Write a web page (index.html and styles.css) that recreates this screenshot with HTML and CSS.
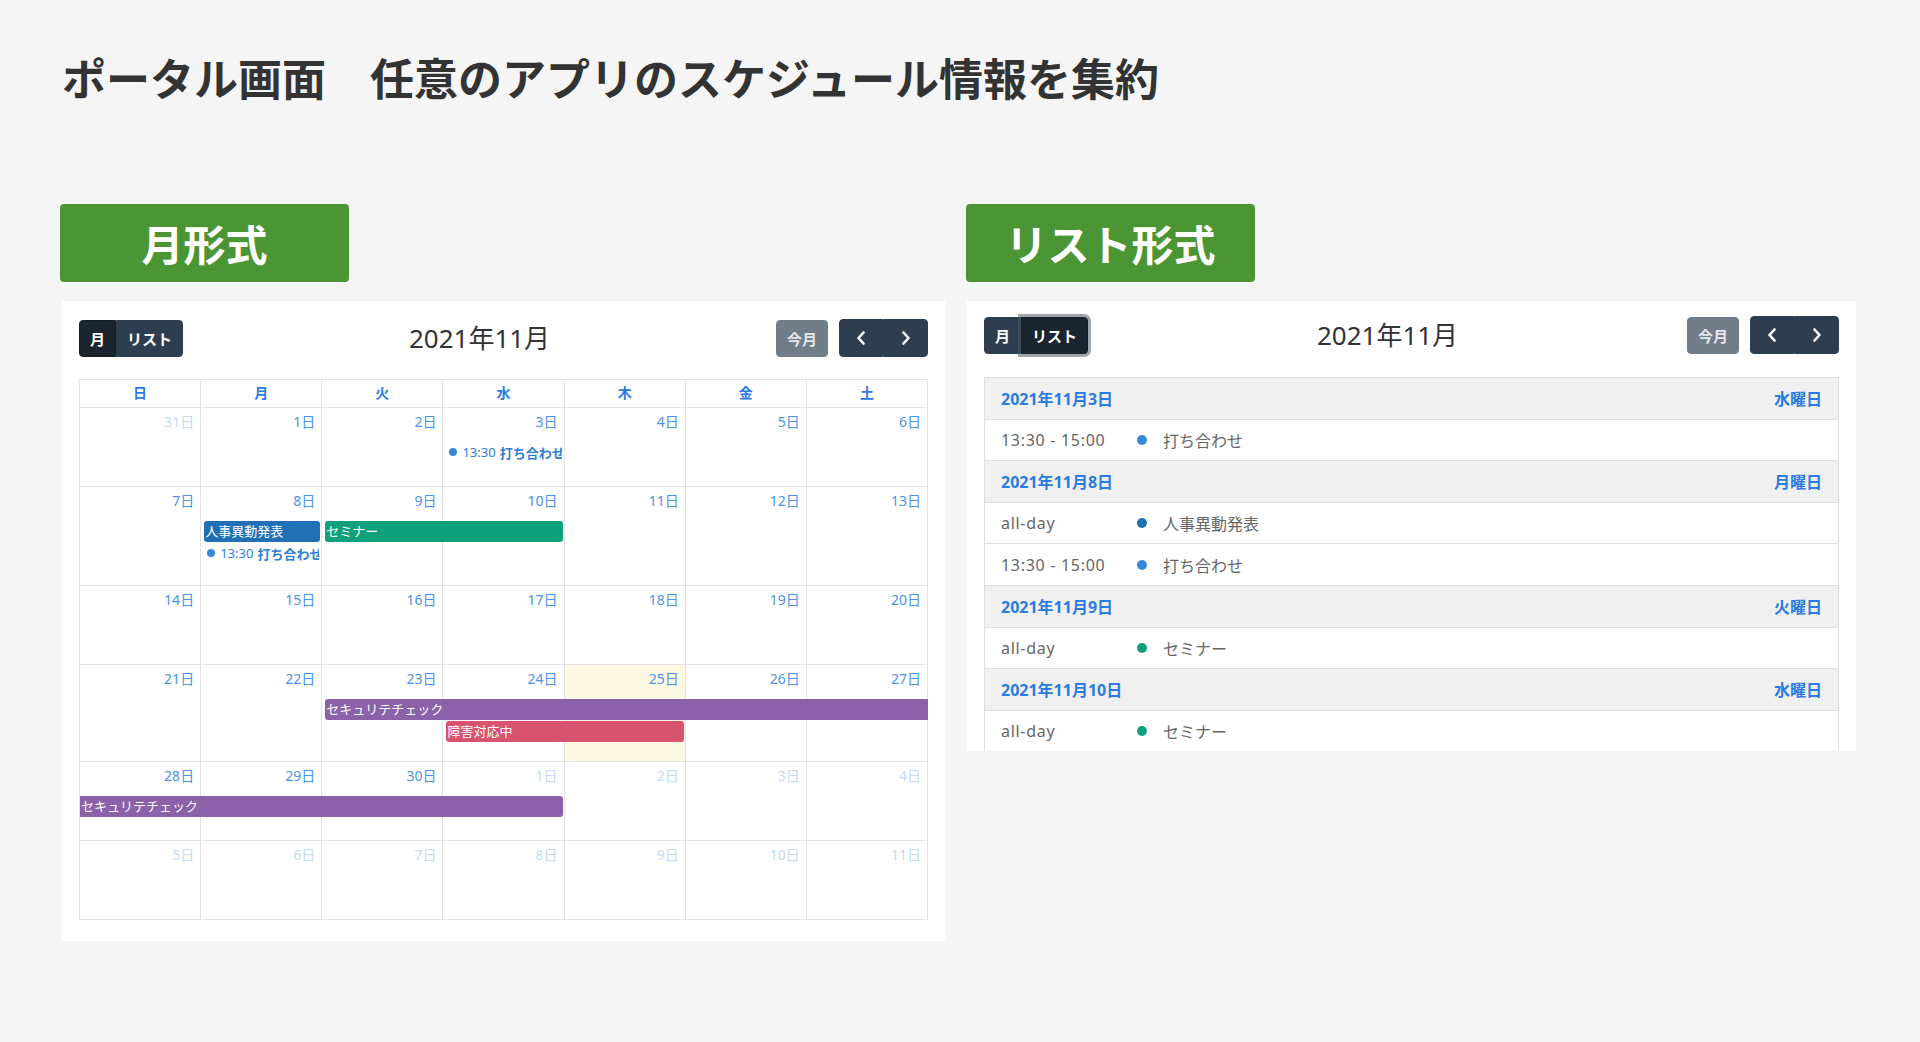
FILE: index.html
```html
<!DOCTYPE html>
<html lang="ja">
<head>
<meta charset="utf-8">
<title>ポータル画面</title>
<link rel="stylesheet" href="styles.css">
</head>
<body>
<div class="page">
  <h1 class="title">ポータル画面　任意のアプリのスケジュール情報を集約</h1>
  <div class="columns">
    <section class="col col-month">
      <div class="label">月形式</div>
      <div class="panel panel-month">
        <div class="toolbar">
          <div class="btn-group">
            <button class="btn active">月</button><button class="btn">リスト</button>
          </div>
          <h2 class="cal-title">2021年11月</h2>
          <div class="toolbar-right">
            <button class="btn btn-today">今月</button>
            <div class="btn-group">
              <button class="btn btn-nav"><svg width="10" height="14" viewBox="0 0 10 14"><path d="M7.5 1.5 L2.5 7 L7.5 12.5" fill="none" stroke="#fff" stroke-width="2.6" stroke-linecap="round" stroke-linejoin="round"/></svg></button><button class="btn btn-nav"><svg width="10" height="14" viewBox="0 0 10 14"><path d="M2.5 1.5 L7.5 7 L2.5 12.5" fill="none" stroke="#fff" stroke-width="2.6" stroke-linecap="round" stroke-linejoin="round"/></svg></button>
            </div>
          </div>
        </div>
        <div class="month">
          <div class="dow">
            <div>日</div><div>月</div><div>火</div><div>水</div><div>木</div><div>金</div><div>土</div>
          </div>
          <div class="week">
            <div class="day c1 other">31日</div><div class="day c2">1日</div><div class="day c3">2日</div><div class="day c4">3日</div><div class="day c5">4日</div><div class="day c6">5日</div><div class="day c7">6日</div>
            <div class="dot-ev r2 s4"><span class="dot"></span><span class="ev-time">13:30</span> <b>打ち合わせ</b></div>
          </div>
          <div class="week">
            <div class="day c1">7日</div><div class="day c2">8日</div><div class="day c3">9日</div><div class="day c4">10日</div><div class="day c5">11日</div><div class="day c6">12日</div><div class="day c7">13日</div>
            <div class="bar bar-blue r2 s2 e3">人事異動発表</div>
            <div class="bar bar-green r2 s3 e5">セミナー</div>
            <div class="dot-ev r3 s2"><span class="dot"></span><span class="ev-time">13:30</span> <b>打ち合わせ</b></div>
          </div>
          <div class="week">
            <div class="day c1">14日</div><div class="day c2">15日</div><div class="day c3">16日</div><div class="day c4">17日</div><div class="day c5">18日</div><div class="day c6">19日</div><div class="day c7">20日</div>
          </div>
          <div class="week">
            <div class="day c1">21日</div><div class="day c2">22日</div><div class="day c3">23日</div><div class="day c4">24日</div><div class="day c5 today">25日</div><div class="day c6">26日</div><div class="day c7">27日</div>
            <div class="bar bar-purple r2 s3 e8 cont-right">セキュリテチェック</div>
            <div class="bar bar-red r3 s4 e6">障害対応中</div>
          </div>
          <div class="week">
            <div class="day c1">28日</div><div class="day c2">29日</div><div class="day c3">30日</div><div class="day c4 other">1日</div><div class="day c5 other">2日</div><div class="day c6 other">3日</div><div class="day c7 other">4日</div>
            <div class="bar bar-purple r2 s1 e5 cont-left">セキュリテチェック</div>
          </div>
          <div class="week">
            <div class="day c1 other">5日</div><div class="day c2 other">6日</div><div class="day c3 other">7日</div><div class="day c4 other">8日</div><div class="day c5 other">9日</div><div class="day c6 other">10日</div><div class="day c7 other">11日</div>
          </div>
        </div>
      </div>
    </section>

    <section class="col col-list">
      <div class="label">リスト形式</div>
      <div class="panel panel-list">
        <div class="toolbar">
          <div class="btn-group">
            <button class="btn">月</button><button class="btn active focus">リスト</button>
          </div>
          <h2 class="cal-title">2021年11月</h2>
          <div class="toolbar-right">
            <button class="btn btn-today">今月</button>
            <div class="btn-group">
              <button class="btn btn-nav"><svg width="10" height="14" viewBox="0 0 10 14"><path d="M7.5 1.5 L2.5 7 L7.5 12.5" fill="none" stroke="#fff" stroke-width="2.6" stroke-linecap="round" stroke-linejoin="round"/></svg></button><button class="btn btn-nav"><svg width="10" height="14" viewBox="0 0 10 14"><path d="M2.5 1.5 L7.5 7 L2.5 12.5" fill="none" stroke="#fff" stroke-width="2.6" stroke-linecap="round" stroke-linejoin="round"/></svg></button>
            </div>
          </div>
        </div>
        <div class="list">
          <div class="list-day"><span>2021年11月3日</span><span>水曜日</span></div>
          <div class="list-event"><span class="l-time">13:30 - 15:00</span><span class="l-dot dot-meet"></span><span class="l-title">打ち合わせ</span></div>
          <div class="list-day"><span>2021年11月8日</span><span>月曜日</span></div>
          <div class="list-event"><span class="l-time">all-day</span><span class="l-dot dot-hr"></span><span class="l-title">人事異動発表</span></div>
          <div class="list-event"><span class="l-time">13:30 - 15:00</span><span class="l-dot dot-meet"></span><span class="l-title">打ち合わせ</span></div>
          <div class="list-day"><span>2021年11月9日</span><span>火曜日</span></div>
          <div class="list-event"><span class="l-time">all-day</span><span class="l-dot dot-sem"></span><span class="l-title">セミナー</span></div>
          <div class="list-day"><span>2021年11月10日</span><span>水曜日</span></div>
          <div class="list-event"><span class="l-time">all-day</span><span class="l-dot dot-sem"></span><span class="l-title">セミナー</span></div>
        </div>
      </div>
    </section>
  </div>
</div>
</body>
</html>
```

FILE: styles.css
```css
* { box-sizing: border-box; }

html, body {
  margin: 0;
  padding: 0;
  background: #f5f5f5;
}

body {
  font-family: "Noto Sans", "Noto Sans CJK JP", sans-serif;
  color: #333;
}

.page {
  padding: 0 0 0 60px;
}

.title {
  margin: 55px 0 0 2px;
  font-family: "Noto Sans CJK JP", sans-serif;
  font-size: 44px;
  line-height: 44px;
  font-weight: 700;
  color: #333;
  white-space: nowrap;
}

.columns {
  display: flex;
  align-items: flex-start;
  gap: 21px;
  margin-top: 105px;
}

.col-month { width: 885px; }
.col-list { width: 890px; }

.label {
  width: 289px;
  height: 78px;
  display: flex;
  align-items: center;
  justify-content: center;
  background: #4b9535;
  color: #fff;
  border-radius: 4px;
  font-family: "Noto Sans CJK JP", sans-serif;
  font-size: 42px;
  font-weight: 700;
  line-height: 1;
}

.panel {
  background: #fff;
  margin-top: 19px;
}

.panel-month {
  margin-left: 2px;
  width: 883px;
  padding: 18px 17px 21px 17px;
}

.panel-list {
  margin-left: 1px;
  width: 889px;
  height: 450px;
  padding: 15px 17px 0 17px;
  overflow: hidden;
}

/* toolbar */
.toolbar {
  display: flex;
  justify-content: space-between;
  align-items: center;
  height: 38px;
  margin-bottom: 22px;
}

.panel-list .toolbar { margin-bottom: 23px; }

.toolbar-right {
  display: flex;
  align-items: center;
  gap: 11px;
}

.btn-group {
  display: flex;
}

.btn {
  font-family: "Noto Sans CJK JP", sans-serif;
  font-size: 15px;
  font-weight: 700;
  color: #fff;
  background: #2c3e50;
  border: 1px solid #2c3e50;
  height: 37px;
  padding: 0 10px;
  margin: 0;
  line-height: 35px;
  cursor: pointer;
  border-radius: 0;
  position: relative;
}

.btn-group .btn:first-child { border-radius: 4px 0 0 4px; }
.btn-group .btn:last-child { border-radius: 0 4px 4px 0; }

.btn.active {
  background: #1a252f;
  border-color: #151e27;
}

.btn.focus {
  box-shadow: 0 0 0 3px rgba(76, 91, 106, 0.55);
  z-index: 1;
}

.btn-today {
  background: #717d89;
  border-color: #717d89;
  color: #e6e9ec;
  border-radius: 4px;
  width: 52px;
  padding: 0;
}

.btn-nav {
  width: 44.5px;
  height: 38px;
  padding: 0;
  display: flex;
  align-items: center;
  justify-content: center;
}

.btn-nav svg { display: block; }

.cal-title {
  margin: 0;
  font-family: "Noto Sans", "Noto Sans CJK JP", sans-serif;
  font-size: 26px;
  font-weight: 400;
  line-height: 1;
  color: #333;
}

/* month grid */
.month {
  border-top: 1px solid #e3e3e3;
  border-left: 1px solid #e3e3e3;
}

.dow {
  display: grid;
  grid-template-columns: repeat(7, 1fr);
  height: 28px;
}

.dow div {
  border-right: 1px solid #e3e3e3;
  border-bottom: 1px solid #e3e3e3;
  text-align: center;
  font-family: "Noto Sans CJK JP", sans-serif;
  font-size: 14px;
  font-weight: 700;
  line-height: 25px;
  color: #2b7be3;
}

.week {
  display: grid;
  grid-template-columns: repeat(7, 1fr);
  grid-template-rows: 34px auto auto minmax(18px, 1fr);
  min-height: 79px;
  border-bottom: 1px solid #e3e3e3;
}

.day {
  grid-row: 1 / -1;
  border-right: 1px solid #e3e3e3;
  text-align: right;
  padding: 4px 6px 0 0;
  font-size: 14px;
  line-height: 20px;
  color: #4c93ea;
}

.day.other { color: #c4daf7; }
.day.today { background: #fdf8e1; }

.c1 { grid-column: 1; }
.c2 { grid-column: 2; }
.c3 { grid-column: 3; }
.c4 { grid-column: 4; }
.c5 { grid-column: 5; }
.c6 { grid-column: 6; }
.c7 { grid-column: 7; }

.r2 { grid-row: 2; }
.r3 { grid-row: 3; }
.s1 { grid-column-start: 1; }
.s2 { grid-column-start: 2; }
.s3 { grid-column-start: 3; }
.s4 { grid-column-start: 4; }
.e3 { grid-column-end: 3; }
.e5 { grid-column-end: 5; }
.e6 { grid-column-end: 6; }
.e8 { grid-column-end: 8; }

.bar {
  height: 21px;
  margin: 0 2px 1px 3px;
  padding: 0 1px;
  border-radius: 3px;
  color: #fff;
  font-family: "Noto Sans CJK JP", sans-serif;
  font-size: 13px;
  line-height: 20px;
  white-space: nowrap;
  overflow: hidden;
}

.bar-blue { background: #2170b5; }
.bar-green { background: #0ea17b; }
.bar-purple { background: #8b61a9; }
.bar-red { background: #d7536e; }

.cont-right {
  margin-right: 0;
  border-top-right-radius: 0;
  border-bottom-right-radius: 0;
}

.cont-left {
  margin-left: 0;
  border-top-left-radius: 0;
  border-bottom-left-radius: 0;
}

.dot-ev {
  grid-column-end: span 1;
  height: 20px;
  margin: 0 3px 4px 0;
  padding-left: 6px;
  display: flex;
  align-items: center;
  white-space: nowrap;
  overflow: hidden;
  font-size: 13px;
  color: #2f80dc;
}

.dot-ev .dot {
  flex: none;
  width: 8px;
  height: 8px;
  border-radius: 50%;
  background: #3788d8;
  margin-right: 5px;
}

.dot-ev .ev-time { margin-right: 4px; }
.dot-ev b { font-weight: 700; font-family: "Noto Sans CJK JP", sans-serif; }

/* list */
.list {
  border: 1px solid #dedede;
  border-bottom: 0;
}

.list-day {
  display: flex;
  justify-content: space-between;
  align-items: center;
  height: 41.6px;
  padding: 0 16px;
  background: #f0f0f0;
  border-bottom: 1px solid #dedede;
  font-size: 16px;
  font-weight: 700;
  color: #2a7ce2;
}

.list-event {
  display: grid;
  grid-template-columns: 136px 26px 1fr;
  align-items: center;
  height: 41.6px;
  padding-left: 16px;
  background: #fff;
  border-bottom: 1px solid #dedede;
  font-size: 16px;
  color: #666;
}

.l-time { letter-spacing: 0.7px; }

.l-dot {
  width: 10px;
  height: 10px;
  border-radius: 50%;
}

.dot-meet { background: #3788d8; }
.dot-hr { background: #1f6fb5; }
.dot-sem { background: #0ea07a; }

.l-title { color: #666; }
```
